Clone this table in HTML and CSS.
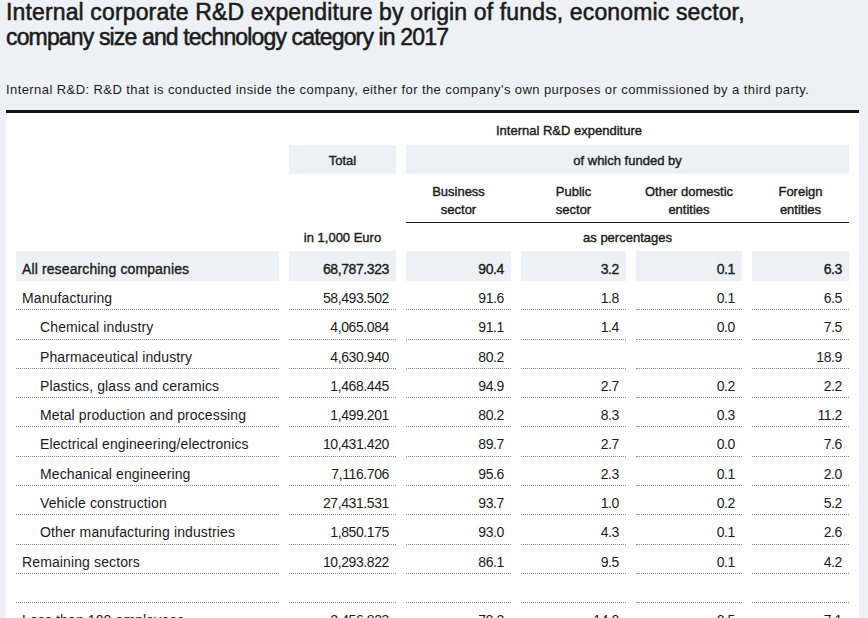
FILE: index.html
```html
<!DOCTYPE html>
<html lang="en">
<head>
<meta charset="utf-8">
<title>Internal corporate R&amp;D expenditure 2017</title>
<link rel="stylesheet" href="styles.css">
</head>
<body>
<div class="page">
  <h1 class="title"><span class="title-line">Internal corporate R&amp;D expenditure by origin of funds, economic sector,</span><span class="title-line tight">company size and technology category in 2017</span></h1>
  <p class="note">Internal R&amp;D: R&amp;D that is conducted inside the company, either for the company's own purposes or commissioned by a third party.</p>
  <div class="panel">
    <table class="data">
      <colgroup>
        <col class="c-label"><col class="c-total"><col class="c-biz"><col class="c-pub"><col class="c-oth"><col class="c-for">
      </colgroup>
      <thead>
        <tr class="hr1"><th></th><th colspan="5">Internal R&amp;D expenditure</th></tr>
        <tr class="hr2"><th></th><th class="shade">Total</th><th colspan="4" class="shade">of which funded by</th></tr>
        <tr class="hr3"><th></th><th></th><th>Business<br>sector</th><th>Public<br>sector</th><th>Other domestic<br>entities</th><th>Foreign<br>entities</th></tr>
        <tr class="hr4"><th></th><th>in 1,000 Euro</th><th colspan="4" class="rule">as percentages</th></tr>
      </thead>
      <tbody>
        <tr class="all"><td class="lbl">All researching companies</td><td class="num">68,787.323</td><td class="num">90.4</td><td class="num">3.2</td><td class="num">0.1</td><td class="num">6.3</td></tr>
        <tr><td class="lbl">Manufacturing</td><td class="num">58,493.502</td><td class="num">91.6</td><td class="num">1.8</td><td class="num">0.1</td><td class="num">6.5</td></tr>
        <tr><td class="lbl sub">Chemical industry</td><td class="num">4,065.084</td><td class="num">91.1</td><td class="num">1.4</td><td class="num">0.0</td><td class="num">7.5</td></tr>
        <tr><td class="lbl sub">Pharmaceutical industry</td><td class="num">4,630.940</td><td class="num">80.2</td><td class="num"></td><td class="num"></td><td class="num">18.9</td></tr>
        <tr><td class="lbl sub">Plastics, glass and ceramics</td><td class="num">1,468.445</td><td class="num">94.9</td><td class="num">2.7</td><td class="num">0.2</td><td class="num">2.2</td></tr>
        <tr><td class="lbl sub">Metal production and processing</td><td class="num">1,499.201</td><td class="num">80.2</td><td class="num">8.3</td><td class="num">0.3</td><td class="num">11.2</td></tr>
        <tr><td class="lbl sub">Electrical engineering/electronics</td><td class="num">10,431.420</td><td class="num">89.7</td><td class="num">2.7</td><td class="num">0.0</td><td class="num">7.6</td></tr>
        <tr><td class="lbl sub">Mechanical engineering</td><td class="num">7,116.706</td><td class="num">95.6</td><td class="num">2.3</td><td class="num">0.1</td><td class="num">2.0</td></tr>
        <tr><td class="lbl sub">Vehicle construction</td><td class="num">27,431.531</td><td class="num">93.7</td><td class="num">1.0</td><td class="num">0.2</td><td class="num">5.2</td></tr>
        <tr><td class="lbl sub">Other manufacturing industries</td><td class="num">1,850.175</td><td class="num">93.0</td><td class="num">4.3</td><td class="num">0.1</td><td class="num">2.6</td></tr>
        <tr><td class="lbl">Remaining sectors</td><td class="num">10,293.822</td><td class="num">86.1</td><td class="num">9.5</td><td class="num">0.1</td><td class="num">4.2</td></tr>
        <tr class="gap"><td class="lbl">&nbsp;</td><td class="num">&nbsp;</td><td class="num">&nbsp;</td><td class="num">&nbsp;</td><td class="num">&nbsp;</td><td class="num">&nbsp;</td></tr>
        <tr><td class="lbl">Less than 100 employees</td><td class="num">2,456.823</td><td class="num">79.2</td><td class="num">14.0</td><td class="num">0.5</td><td class="num">7.1</td></tr>
      </tbody>
    </table>
  </div>
</div>
</body>
</html>
```
FILE: styles.css
```css
html, body {
  margin: 0;
  padding: 0;
  overflow: hidden;
}

body {
  background: #edf1f5;
  color: #1b1b1b;
  font-family: "Liberation Sans", Arial, sans-serif;
}

.page {
  padding: 0 9px 0 6px;
}

.title {
  margin: 0;
  font-size: 23px;
  line-height: 25px;
  font-weight: normal;
  white-space: nowrap;
  -webkit-text-stroke: 0.55px #1b1b1b;
}

.title-line {
  display: block;
  letter-spacing: 0.14px;
}

.title-line.tight {
  letter-spacing: -0.85px;
}

.note {
  margin: 32px 0 12px;
  font-size: 13px;
  line-height: 16px;
  letter-spacing: 0.42px;
  white-space: nowrap;
}

.panel {
  background: #ffffff;
  border-top: 3px solid #161616;
}

.data {
  width: 100%;
  table-layout: fixed;
  border-collapse: separate;
  border-spacing: 10px 0;
}

.c-label { width: 263px; }
.c-total { width: 107px; }
.c-biz { width: 105px; }
.c-pub { width: 105px; }
.c-oth { width: 106px; }
.c-for { width: 97px; }

.data th {
  font-weight: normal;
  font-size: 13px;
  text-align: center;
  padding: 0 4px;
  -webkit-text-stroke: 0.4px #1b1b1b;
}

.hr1 th {
  padding-top: 9px;
  padding-bottom: 6px;
  line-height: 17px;
}

.hr2 th {
  padding-top: 7px;
  padding-bottom: 5px;
  line-height: 17px;
}

.hr3 th {
  padding-top: 9px;
  padding-bottom: 3px;
  line-height: 18px;
  vertical-align: top;
}

.hr4 th {
  border-top: 1px solid transparent;
  padding-top: 6px;
  padding-bottom: 5px;
  line-height: 17px;
}

.hr4 th.rule {
  border-top-color: #1b1b1b;
}

.shade {
  background: #edf1f5;
}

.data td {
  font-size: 14px;
  line-height: 18px;
  padding: 8px 7px 2.3px;
  border-bottom: 1px dotted #8a8a8a;
  white-space: nowrap;
  letter-spacing: 0.12px;
}

.data td.lbl {
  padding-left: 6px;
}

.data td.sub {
  padding-left: 24px;
}

.data td.num {
  text-align: right;
  letter-spacing: -0.4px;
}

.data tr.all td {
  background: #edf1f5;
  border-bottom: 0;
  padding-top: 9px;
  padding-bottom: 3px;
  -webkit-text-stroke: 0.35px #1b1b1b;
}
```
